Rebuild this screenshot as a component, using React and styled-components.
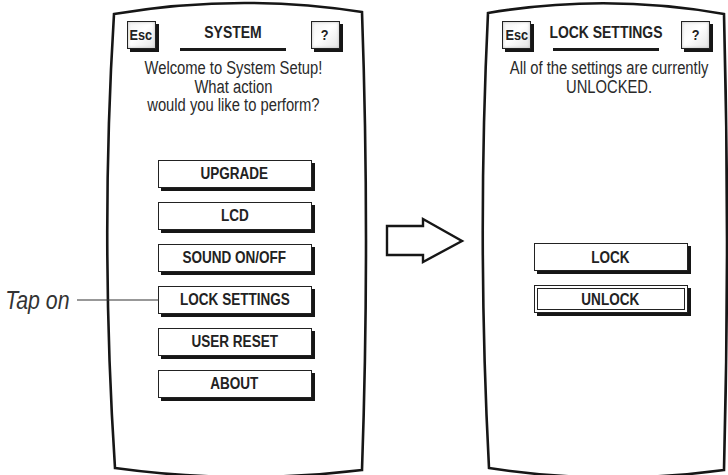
import React from 'react'
import styled, { createGlobalStyle } from 'styled-components'

const GlobalStyle = createGlobalStyle`
    body {
        margin: 0;
        background: #fff;
        font-family: "Liberation Sans", Arial, sans-serif;
        color: #222;
    }
`;

const Page = styled.div`
    width: 728px;
    height: 475px;
    overflow: hidden;
    display: flex;
    padding-left: 104px;
    box-sizing: border-box;
    background: #fff;
`;

const Device = styled.div`
    position: relative;
    flex: none;
    width: 258px;
    height: 475px;
`;

const Outline = styled.svg`
    position: absolute;
    left: 0;
    top: 0;
    overflow: visible;
    pointer-events: none;
`;

const Screen = styled.div`
    position: relative;
    display: flex;
    flex-direction: column;
    align-items: center;
    padding-top: 21px;
`;

// the manual uses a condensed face; squeeze Liberation Sans to Arial Narrow widths
const Narrow = styled.span`
    display: inline-block;
    white-space: nowrap;
    transform: scaleX(0.82);
    transform-origin: ${props => props.origin || "center"};
`;

const Header = styled.div`
    display: flex;
    justify-content: space-between;
    align-items: flex-start;
    width: ${props => props.width}px;
    margin-left: ${props => props.shift || 0}px;
`;

const Key = styled.div`
    width: 29px;
    height: 28px;
    box-sizing: border-box;
    border: 1px solid #222;
    background: linear-gradient(135deg, #f2f2f2, #fff 45%, #e4e4e4);
    box-shadow: inset 0 0 3px #bbb, 3px 3px 0 #161616;
    display: flex;
    align-items: center;
    justify-content: center;
    font-weight: 700;
    font-size: 15.5px;
`;

const Title = styled.div`
    width: 106px;
    display: flex;
    justify-content: center;
    font-size: 17px;
    font-weight: 700;
    line-height: 20px;
    padding: 2px 0 5px;
    border-bottom: 3px solid #1a1a1a;
`;

const Message = styled.div`
    margin-top: 8px;
    font-size: 18px;
    line-height: 18.5px;
    text-align: center;
    white-space: nowrap;
    color: #2a2a2a;
    transform: scaleX(0.82);
`;

const Menu = styled.div`
    display: flex;
    flex-direction: column;
    gap: 14px;
    margin-top: ${props => props.top}px;
    margin-left: 3px;
`;

const MenuButton = styled.div`
    position: relative;
    width: 154px;
    height: 28px;
    box-sizing: border-box;
    border: 1px solid #222;
    background: #fff;
    box-shadow: ${props => props.selected
        ? "inset 0 0 0 2px #fff, inset 0 0 0 3px #222, 3px 3px 0 #161616"
        : "3px 3px 0 #161616"};
    display: flex;
    align-items: center;
    justify-content: center;
    font-size: 16.5px;
    font-weight: 700;
`;

const Callout = styled.div`
    position: absolute;
    right: 100%;
    top: 50%;
    transform: translateY(-50%);
    display: flex;
    align-items: center;
    gap: 7px;
    font-style: italic;
    font-weight: 400;
    font-size: 26px;
    color: #333;
`;

const Leader = styled.span`
    display: block;
    width: 82px;
    height: 1px;
    background: #333;
`;

const ArrowSlot = styled.div`
    flex: none;
    width: 118px;
    padding-top: 216px;
    padding-left: 23px;
    box-sizing: border-box;
`;

const leftMenu = ["UPGRADE", "LCD", "SOUND ON/OFF", "LOCK SETTINGS", "USER RESET", "ABOUT"]

const App = () => {
    return (
        <>
            <GlobalStyle />
            <Page>
                <Device>
                    <Outline width="258" height="475">
                        <path d="M10,14 Q134,-7 258,12 Q266,240 258,470 Q134,485 11,468 Q-4,240 10,14 Z"
                              fill="none" stroke="#161616" strokeWidth="2.6" strokeLinejoin="miter" />
                    </Outline>
                    <Screen>
                        <Header width={213}>
                            <Key><Narrow>Esc</Narrow></Key>
                            <Title><Narrow>SYSTEM</Narrow></Title>
                            <Key><Narrow>?</Narrow></Key>
                        </Header>
                        <Message>
                            Welcome to System Setup!<br />
                            What action<br />
                            would you like to perform?
                        </Message>
                        <Menu top={45}>
                            {leftMenu.map(label => (
                                <MenuButton key={label}>
                                    <Narrow>{label}</Narrow>
                                    {label === "LOCK SETTINGS" && (
                                        <Callout>
                                            <Narrow origin="right">Tap on</Narrow>
                                            <Leader />
                                        </Callout>
                                    )}
                                </MenuButton>
                            ))}
                        </Menu>
                    </Screen>
                </Device>
                <ArrowSlot>
                    <svg width="80" height="48" viewBox="0 0 80 48">
                        <polygon points="2,10 38,10 38,3 77,25 38,46 38,39 2,39"
                                 fill="#fff" stroke="#161616" strokeWidth="2.4" strokeLinejoin="miter" />
                    </svg>
                </ArrowSlot>
                <Device>
                    <Outline width="258" height="475">
                        <path d="M8,13 Q126,-7 244,14 Q250,240 244,470 Q126,486 9,468 Q-3,240 8,13 Z"
                              fill="none" stroke="#161616" strokeWidth="2.6" strokeLinejoin="miter" />
                    </Outline>
                    <Screen>
                        <Header width={208} shift={-6}>
                            <Key><Narrow>Esc</Narrow></Key>
                            <Title><Narrow>LOCK SETTINGS</Narrow></Title>
                            <Key><Narrow>?</Narrow></Key>
                        </Header>
                        <Message>
                            All of the settings are currently<br />
                            UNLOCKED.
                        </Message>
                        <Menu top={147}>
                            <MenuButton><Narrow>LOCK</Narrow></MenuButton>
                            <MenuButton selected><Narrow>UNLOCK</Narrow></MenuButton>
                        </Menu>
                    </Screen>
                </Device>
            </Page>
        </>
    )
}

export default App
